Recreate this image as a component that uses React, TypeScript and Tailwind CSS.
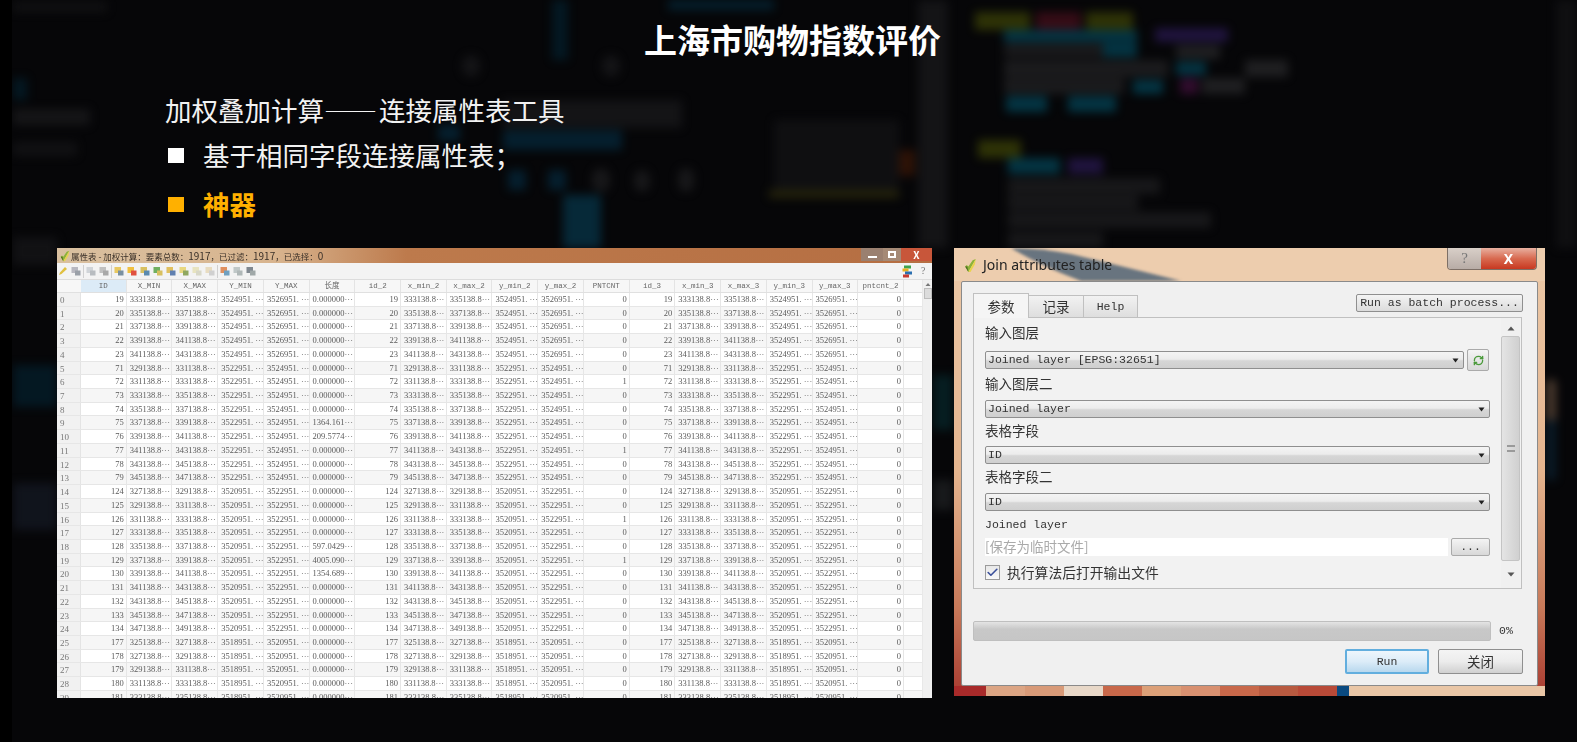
import { Check, RefreshCw } from 'lucide-react'

const HEADERS = [
  'ID', 'X_MIN', 'X_MAX', 'Y_MIN', 'Y_MAX', '长度', 'id_2', 'x_min_2', 'x_max_2',
  'y_min_2', 'y_max_2', 'PNTCNT', 'id_3', 'x_min_3', 'x_max_3', 'y_min_3', 'y_max_3', 'pntcnt_2',
]

const IDS = [19, 20, 21, 22, 23, 71, 72, 73, 74, 75, 76, 77, 78, 79, 124, 125, 126, 127, 128, 129, 130, 131, 132, 133, 134, 177, 178, 179, 180, 181]
const X_MIN = [333, 335, 337, 339, 341, 329, 331, 333, 335, 337, 339, 341, 343, 345, 327, 329, 331, 333, 335, 337, 339, 341, 343, 345, 347, 325, 327, 329, 331, 333]
const LENGTHS: Record<number, string> = { 9: '1364.161', 10: '209.5774', 18: '597.0429', 19: '4005.090', 20: '1354.689' }
const COUNTS = [6, 11, 16, 19]

function yMin(i: number) {
  if (i < 5) return 3524951
  if (i < 14) return 3522951
  if (i < 25) return 3520951
  return 3518951
}

function rowCells(i: number) {
  const x1 = `${X_MIN[i]}138.8···`
  const x2 = `${X_MIN[i] + 2}138.8···`
  const y1 = `${yMin(i)}. ···`
  const y2 = `${yMin(i) + 2000}. ···`
  const id = String(IDS[i])
  return [
    id, x1, x2, y1, y2, `${LENGTHS[i] ?? '0.000000'}···`,
    id, x1, x2, y1, y2, COUNTS.includes(i) ? '1' : '0',
    id, x1, x2, y1, y2, '0',
  ]
}

const RIGHT_ALIGNED = [0, 6, 11, 12, 17]

// blurred code editor behind the slide
const BACKDROP = [
  'left-[918px] top-0 w-[30px] h-[248px] bg-[#1a1a1c]',
  'left-[1556px] top-0 w-[21px] h-[248px] bg-[#131315]',
  'left-[975px] top-[12px] w-[55px] h-[18px] bg-[#3f4506]',
  'left-[1036px] top-[12px] w-[45px] h-[18px] bg-[#4a0f1c]',
  'left-[1086px] top-[12px] w-[47px] h-[18px] bg-[#3f4506]',
  'left-[1004px] top-[30px] w-[133px] h-[12px] bg-[#03485c]',
  'left-[1155px] top-[28px] w-[73px] h-[14px] bg-[#2b1a55]',
  'left-[1004px] top-[43px] w-[99px] h-[14px] bg-[#222224]',
  'left-[1103px] top-[43px] w-[34px] h-[14px] bg-[#03485c]',
  'left-[1176px] top-[45px] w-[44px] h-[14px] bg-[#2a2a2c]',
  'left-[1004px] top-[60px] w-[164px] h-[17px] bg-[#242426]',
  'left-[1176px] top-[62px] w-[30px] h-[13px] bg-[#03485c]',
  'left-[1245px] top-[60px] w-[43px] h-[17px] bg-[#2a2a2c]',
  'left-[1004px] top-[78px] w-[120px] h-[16px] bg-[#242426]',
  'left-[1133px] top-[80px] w-[30px] h-[14px] bg-[#03485c]',
  'left-[1180px] top-[78px] w-[18px] h-[16px] bg-[#45103f]',
  'left-[1202px] top-[78px] w-[43px] h-[16px] bg-[#2a2a2c]',
  'left-[1006px] top-[96px] w-[41px] h-[16px] bg-[#03485c]',
  'left-[1068px] top-[96px] w-[48px] h-[16px] bg-[#03485c]',
  'left-[978px] top-[140px] w-[43px] h-[18px] bg-[#3f4506]',
  'left-[1008px] top-[158px] w-[52px] h-[16px] bg-[#03485c]',
  'left-[1068px] top-[158px] w-[35px] h-[16px] bg-[#2b1a55]',
  'left-[1008px] top-[178px] w-[152px] h-[16px] bg-[#1f1f21]',
  'left-[1008px] top-[195px] w-[130px] h-[15px] bg-[#1f1f21]',
  'left-[1008px] top-[212px] w-[203px] h-[16px] bg-[#1f1f21]',
  'left-[1008px] top-[232px] w-[95px] h-[16px] bg-[#1f1f21]',
  'left-[552px] top-0 w-[16px] h-[60px] bg-[#03202e]',
  'left-[668px] top-0 w-[106px] h-[10px] bg-[#042a3d]',
  'left-[503px] top-[100px] w-[179px] h-[28px] bg-[#1a1a1c]',
  'left-[503px] top-[130px] w-[119px] h-[20px] bg-[#052a3e]',
  'left-[438px] top-[125px] w-[22px] h-[16px] bg-[#052a3e]',
  'left-[462px] top-[55px] w-[18px] h-[22px] rounded-full bg-[#1a1a1c]',
  'left-[602px] top-[55px] w-[18px] h-[22px] rounded-full bg-[#1a1a1c]',
  'left-[592px] top-[168px] w-[18px] h-[24px] rounded-full bg-[#1f1f21]',
  'left-[634px] top-[170px] w-[16px] h-[22px] rounded-full bg-[#1f1f21]',
  'left-[678px] top-[168px] w-[16px] h-[24px] rounded-full bg-[#1f1f21]',
  'left-[508px] top-[170px] w-[18px] h-[20px] bg-[#052a3e]',
  'left-[548px] top-[170px] w-[18px] h-[20px] bg-[#052a3e]',
  'left-[563px] top-[195px] w-[38px] h-[53px] bg-[#06384d]',
  'left-[774px] top-[120px] w-[125px] h-[70px] bg-[#141416]',
  'left-[769px] top-[190px] w-[130px] h-[8px] bg-[#33300c]',
  'left-[899px] top-[150px] w-[16px] h-[26px] bg-[#3f1806]',
  'left-[13px] top-[2px] w-[94px] h-[10px] bg-[#151517]',
  'left-[13px] top-[78px] w-[14px] h-[22px] bg-[#03202e]',
  'left-[13px] top-[109px] w-[77px] h-[16px] bg-[#1c1c1e]',
  'left-[13px] top-[142px] w-[64px] h-[14px] bg-[#161618]',
  'left-[13px] top-[237px] w-[44px] h-[28px] bg-[#171719]',
  'left-[13px] top-[365px] w-[44px] h-[42px] bg-[#04202e]',
  'left-[13px] top-[483px] w-[44px] h-[47px] bg-[#151a25]',
  'left-[933px] top-[375px] w-[20px] h-[55px] bg-[#06282c]',
  'left-[933px] top-[480px] w-[20px] h-[30px] bg-[#202224]',
  'left-[1546px] top-[380px] w-[10px] h-[40px] bg-[#6a5240]',
  'left-[1546px] top-[420px] w-[10px] h-[60px] bg-[#0c2436]',
]

function QgisIcon({ size = 13 }: { size?: number }) {
  return (
    <svg width={size} height={size} viewBox="0 0 14 14" className="shrink-0">
      <path d="M2 8 L5 13 L12 1 L9 2 L5 8 L3.5 6.5 Z" fill="#8db33a" />
      <path d="M5 13 L12 1 L11 6 L7 13 Z" fill="#e8d44a" />
      <path d="M2 8 L5 13 L4 8 Z" fill="#4a6a20" />
    </svg>
  )
}

function ToolIcon({ a, b }: { a: string; b: string }) {
  return (
    <svg width="10" height="10" viewBox="0 0 10 10" className="shrink-0">
      <rect x="0.5" y="1" width="6.5" height="6" fill={a} />
      <rect x="4" y="4.5" width="5.5" height="5" fill={b} />
    </svg>
  )
}

function Separator() {
  return <span className="mx-[-1px] h-[13px] w-px bg-[#d0d0d0]" />
}

function AttributeTable() {
  return (
    <div className="flex h-[450px] w-[875px] shrink-0 flex-col overflow-hidden bg-white blur-[0.35px]">
      <div className="flex h-[15px] shrink-0 items-center bg-[linear-gradient(90deg,#d9c0a0_0%,#d8b48e_25%,#bd7a4c_40%,#b56e42_100%)] pl-[2px]">
        <QgisIcon size={12} />
        <span className="text-[8.5px] leading-none whitespace-nowrap text-[#3a3028]">
          属性表 - 加权计算：要素总数：<span className="text-[10px]">1917</span>，已过滤：<span className="text-[10px]">1917</span>，已选择：<span className="text-[10px]">0</span>
        </span>
        <div className="ml-auto flex h-[13px] self-start">
          <div className="flex w-[22px] items-end justify-center bg-[#9a8070] pb-[3px]">
            <span className="h-[2px] w-[9px] bg-white" />
          </div>
          <div className="flex w-[18px] items-center justify-center bg-[#a58a76]">
            <span className="h-[7px] w-[8px] border-2 border-white" />
          </div>
          <div className="flex w-[31px] items-center justify-center bg-[#c8563a] text-[10px] leading-none font-bold text-white">
            X
          </div>
        </div>
      </div>
      <div className="flex h-[17px] shrink-0 items-center gap-[3px] border-b border-[#dcdcdc] bg-[#f3f3f3] pl-[1px] pr-[3px]">
        <svg width="10" height="10" viewBox="0 0 10 10" className="shrink-0">
          <path d="M1 9 L2 6.5 L7 1 L9 3 L3.5 8 Z" fill="#e0c040" />
        </svg>
        <ToolIcon a="#b8b8c0" b="#9aa0a8" />
        <Separator />
        <ToolIcon a="#d0d4d8" b="#b8bcc0" />
        <ToolIcon a="#c0c0c0" b="#a8a8a8" />
        <Separator />
        <ToolIcon a="#e8c860" b="#7a90a0" />
        <ToolIcon a="#f0c040" b="#e05040" />
        <ToolIcon a="#d8c060" b="#5a8ab0" />
        <ToolIcon a="#70b060" b="#d8c060" />
        <ToolIcon a="#e0c060" b="#6080b0" />
        <ToolIcon a="#e8d880" b="#90a860" />
        <ToolIcon a="#e8e4c0" b="#d8d8c8" />
        <ToolIcon a="#e8dcc0" b="#d0d0d0" />
        <Separator />
        <ToolIcon a="#e09060" b="#70a0c0" />
        <ToolIcon a="#c0c8c8" b="#b0b8b8" />
        <ToolIcon a="#808890" b="#a0a8a8" />
        <svg width="11" height="13" viewBox="0 0 11 13" className="ml-auto">
          <rect x="2" y="0.5" width="7" height="3" fill="#3fa34d" />
          <rect x="0.5" y="3.5" width="6" height="3" fill="#e8b020" />
          <rect x="3" y="6.5" width="7" height="3" fill="#2a6fb0" />
          <rect x="1" y="9.5" width="6" height="3" fill="#c83a30" />
        </svg>
        <span className="ml-[5px] w-[8px] font-['Liberation_Serif',serif] text-[10px] leading-none text-[#777]">?</span>
      </div>
      <div className="flex min-h-0 flex-1">
        <div className="w-[865px] overflow-hidden">
          <div className="grid h-[13px] grid-cols-[24px_repeat(18,45.72px)] border-b border-[#e0e0e0] bg-[#f7f7f7]">
            <span />
            {HEADERS.map((h, c) => (
              <span
                key={c}
                className={`border-r border-[#e4e4e4] text-center font-['Liberation_Mono','Noto_Sans_CJK_SC',monospace] text-[7.5px] leading-[12px] text-[#666] ${c === 0 ? 'bg-[#dcebf7]' : ''}`}
              >
                {h}
              </span>
            ))}
          </div>
          {IDS.map((_, i) => (
            <div
              key={i}
              className={`grid h-[13.73px] grid-cols-[24px_repeat(18,45.72px)] border-b border-[#e6e6e6] ${i % 2 ? 'bg-[#f6f6f6]' : 'bg-white'}`}
            >
              <span className="overflow-hidden border-r border-[#e4e4e4] bg-[#f1f1f1] pl-[3px] font-['Liberation_Serif',serif] text-[9px] leading-[15px] text-[#777]">
                {i}
              </span>
              {rowCells(i).map((v, c) => (
                <span
                  key={c}
                  className={`overflow-hidden border-r border-[#e6e6e6] font-['Liberation_Serif',serif] text-[8.5px] leading-[12px] whitespace-nowrap text-[#5a5a5a] ${RIGHT_ALIGNED.includes(c) ? 'pr-[2px] text-right' : 'pl-[3px]'}`}
                >
                  {v}
                </span>
              ))}
            </div>
          ))}
        </div>
        <div className="flex w-[10px] flex-col items-center border-l border-[#e8e8e8] bg-[#f0f0f0]">
          <svg width="6" height="5" viewBox="0 0 6 5" className="mt-[2px]">
            <path d="M3 1 L5.5 4 L0.5 4 Z" fill="#777" />
          </svg>
          <span className="mt-[1px] h-[11px] w-[8px] border border-[#bdbdbd] bg-[#dcdcdc]" />
        </div>
      </div>
    </div>
  )
}

function Arrow() {
  return (
    <svg width="7" height="5" viewBox="0 0 7 5" className="shrink-0">
      <path d="M0.5 0.5 L6.5 0.5 L3.5 4.5 Z" fill="#222" />
    </svg>
  )
}

function Combo({ text, className }: { text: string; className: string }) {
  return (
    <div
      className={`flex shrink-0 items-center justify-between rounded-[2px] border border-[#8f8f8f] bg-[linear-gradient(180deg,#f4f4f4_0%,#ececec_45%,#d6d6d6_55%,#cfcfcf_100%)] pl-[2px] pr-[4px] font-['Liberation_Mono',monospace] text-[11.5px] leading-none text-[#333] ${className}`}
    >
      <span>{text}</span>
      <Arrow />
    </div>
  )
}

function FieldLabel({ text, className }: { text: string; className: string }) {
  return (
    <div className={`h-[18px] font-['Noto_Sans_CJK_SC',sans-serif] text-[13.5px] leading-[12px] text-[#333] ${className}`}>
      {text}
    </div>
  )
}

const TASKBAR = [
  'w-[32px] bg-[#a82a2a]',
  'w-[39px] bg-[#dca584]',
  'w-[39px] bg-[#d89a78]',
  'w-[39px] bg-[#e8d8c8]',
  'w-[39px] bg-[#c8684a]',
  'w-[39px] bg-[#dca078]',
  'w-[39px] bg-[#d89070]',
  'w-[39px] bg-[#c8684a]',
  'w-[39px] bg-[#b85a40]',
  'w-[39px] bg-[#b84a38]',
  'w-[12px] bg-[#0a4a80]',
]

function JoinDialog() {
  return (
    <div className="flex h-[448px] w-[591px] shrink-0 flex-col overflow-hidden bg-[linear-gradient(180deg,#ecc9a8_0%,#e4b48e_50%,#c87a5a_80%,#a83a30_100%)] blur-[0.3px]">
      <div className="relative flex h-[33px] shrink-0 overflow-hidden bg-[#edcdae] pl-[9px]">
        <svg viewBox="0 0 170 33" className="absolute top-0 left-[57px] h-[33px] w-[170px] blur-[1.5px]">
          <path d="M0 0 Q30 18 70 33 L170 33 Q110 18 60 6 Q30 0 0 0 Z" fill="#68747f" />
        </svg>
        <div className="relative mt-[9px] flex h-[16px] items-center gap-[5px]">
          <QgisIcon size={15} />
          <span className="font-['Noto_Sans',sans-serif] text-[14px] leading-none text-[#222]">Join attributes table</span>
        </div>
        <div className="relative mr-[8px] ml-auto flex h-[22px] overflow-hidden rounded-b-[4px] border border-t-0 border-[#7d6f66]">
          <div className="flex w-[33px] items-center justify-center bg-[linear-gradient(180deg,#d8cfc8,#b8aca6)] font-['Liberation_Serif',serif] text-[15px] leading-none text-[#777]">
            ?
          </div>
          <div className="flex w-[55px] items-center justify-center bg-[linear-gradient(180deg,#e8b0a0_0%,#d86a50_50%,#c83820_100%)] font-['Noto_Sans',sans-serif] text-[14px] leading-none font-bold text-white">
            X
          </div>
        </div>
      </div>
      <div className="mx-[7px] flex h-[405px] shrink-0 flex-col rounded-[2px] border border-[#8a8a8a] bg-[#f0f0f0] pt-[11px] pl-[11px]">
        <div className="flex h-[24px] w-[550px] items-start justify-between">
          <div className="flex items-end">
            <div className="relative z-10 flex h-[25px] w-[56px] items-center justify-center border border-b-0 border-[#c0c0c0] bg-[#f5f5f5] font-['Noto_Sans_CJK_SC',sans-serif] text-[13.5px] text-[#333]">
              参数
            </div>
            <div className="flex h-[23px] w-[55px] items-center justify-center border-y border-r border-[#c0c0c0] bg-[linear-gradient(180deg,#f2f2f2,#dedede)] font-['Noto_Sans_CJK_SC',sans-serif] text-[13.5px] text-[#333]">
              记录
            </div>
            <div className="flex h-[23px] w-[54px] items-center justify-center border-y border-r border-[#c0c0c0] bg-[linear-gradient(180deg,#f2f2f2,#dedede)] font-['Liberation_Mono',monospace] text-[11.5px] text-[#333]">
              Help
            </div>
          </div>
          <div className="mt-[1px] flex h-[18px] w-[167px] items-center justify-center rounded-[2px] border border-[#8f8f8f] bg-[linear-gradient(180deg,#f4f4f4,#dcdcdc)] font-['Liberation_Mono',monospace] text-[11.5px] leading-none whitespace-nowrap text-[#333]">
            Run as batch process...
          </div>
        </div>
        <div className="flex h-[272px] w-[549px] border border-[#c0c0c0] bg-[#f2f2f2]">
          <div className="w-[516px] pt-[8px] pl-[11px]">
            <FieldLabel text="输入图层" className="" />
            <div className="mt-[5px] flex h-[22px] items-center gap-[3px]">
              <Combo text="Joined layer [EPSG:32651]" className="h-[18px] w-[479px]" />
              <div className="flex h-[22px] w-[22px] shrink-0 items-center justify-center rounded-[2px] border border-[#aaa] bg-[linear-gradient(180deg,#f4f4f4,#d8d8d8)]">
                <RefreshCw size={11} strokeWidth={3} className="text-[#4a9a3a]" />
              </div>
            </div>
            <FieldLabel text="输入图层二" className="mt-[6px]" />
            <Combo text="Joined layer" className="mt-[5px] h-[18px] w-[505px]" />
            <FieldLabel text="表格字段" className="mt-[6px]" />
            <Combo text="ID" className="mt-[4px] h-[18px] w-[505px]" />
            <FieldLabel text="表格字段二" className="mt-[6px]" />
            <Combo text="ID" className="mt-[5px] h-[18px] w-[505px]" />
            <div className="mt-[5px] h-[18px] font-['Liberation_Mono',monospace] text-[11.5px] leading-[18px] text-[#333]">
              Joined layer
            </div>
            <div className="mt-[4px] flex h-[18px] gap-[3px]">
              <div className="flex w-[463px] shrink-0 items-center bg-white font-['Noto_Sans_CJK_SC',sans-serif] text-[13.5px] leading-none text-[#aaa]">
                [保存为临时文件]
              </div>
              <div className="flex w-[39px] shrink-0 items-center justify-center rounded-[2px] border border-[#aaa] bg-[linear-gradient(180deg,#f4f4f4,#d8d8d8)] font-['Liberation_Mono',monospace] text-[11.5px] leading-none text-[#333]">
                ...
              </div>
            </div>
            <div className="mt-[9px] flex h-[15px] items-center gap-[7px]">
              <div className="flex h-[15px] w-[15px] items-center justify-center border border-[#9a9a9a] bg-[linear-gradient(180deg,#e8e8e8,#f8f8f8)]">
                <Check size={13} strokeWidth={3} className="text-[#3a4f9a]" />
              </div>
              <span className="font-['Noto_Sans_CJK_SC',sans-serif] text-[13.8px] leading-none text-[#333]">执行算法后打开输出文件</span>
            </div>
          </div>
          <div className="mr-[1px] ml-auto flex w-[19px] flex-col items-center bg-[#f0f0f0] pt-[8px]">
            <svg width="8" height="5" viewBox="0 0 8 5">
              <path d="M4 0.5 L7.5 4.5 L0.5 4.5 Z" fill="#555" />
            </svg>
            <div className="mt-[5px] flex h-[225px] w-[19px] items-center justify-center rounded-[2px] border border-[#c4c4c4] bg-[linear-gradient(90deg,#e4e4e4,#d0d0d0)]">
              <span className="h-[7px] w-[8px] border-y-2 border-[#9a9a9a]" />
            </div>
            <svg width="8" height="5" viewBox="0 0 8 5" className="mt-[11px]">
              <path d="M0.5 0.5 L7.5 0.5 L4 4.5 Z" fill="#555" />
            </svg>
          </div>
        </div>
        <div className="mt-[32px] flex h-[20px] items-center">
          <div className="h-[20px] w-[518px] rounded-[2px] border border-[#bfbfbf] bg-[linear-gradient(180deg,#e4e4e4_0%,#c8c8c8_40%,#c6c6c6_100%)]" />
          <span className="ml-[8px] font-['Liberation_Mono',monospace] text-[11.5px] leading-none text-[#333]">0%</span>
        </div>
        <div className="mt-[8px] flex w-[550px] justify-end gap-[9px]">
          <div className="flex h-[25px] w-[84px] items-center justify-center rounded-[2px] border-2 border-[#62aede] bg-[linear-gradient(180deg,#eef6fc_0%,#dcecf8_50%,#b8d8ee_100%)] font-['Liberation_Mono',monospace] text-[11.5px] leading-none text-[#333]">
            Run
          </div>
          <div className="flex h-[25px] w-[85px] items-center justify-center rounded-[2px] border border-[#8f8f8f] bg-[linear-gradient(180deg,#f4f4f4_0%,#ececec_50%,#d0d0d0_100%)] font-['Noto_Sans_CJK_SC',sans-serif] text-[13.5px] leading-none text-[#333]">
            关闭
          </div>
        </div>
      </div>
      <div className="flex h-[10px] shrink-0 bg-[#e9c6a6]">
        {TASKBAR.map((c, i) => (
          <span key={i} className={`h-full ${c}`} />
        ))}
      </div>
    </div>
  )
}

export default function App() {
  return (
    <div lang="zh-CN" className="relative h-[742px] w-[1577px] overflow-hidden bg-[#060608] font-['Noto_Sans_CJK_SC',sans-serif]">
      <div className="absolute inset-0 opacity-70 blur-[5px]">
        {BACKDROP.map((c, i) => (
          <div key={i} className={`absolute ${c}`} />
        ))}
      </div>
      <div className="absolute top-0 left-0 h-full w-[12px] bg-black" />

      <div className="relative flex h-full flex-col">
        <h1 className="flex h-[78px] shrink-0 items-center justify-center pl-[8px] text-[33px] leading-none font-bold text-white">
          上海市购物指数评价
        </h1>
        <div className="mt-[9px] h-[46px] shrink-0 pl-[165px] text-[26.5px] leading-[46px] text-[#f2f2f2]">
          加权叠加计算<span className="tracking-[2px]">——</span>连接属性表工具
        </div>
        <div className="mt-[-1px] flex h-[46px] shrink-0 items-center gap-[19px] pl-[168px] text-[26.5px] leading-none text-[#f2f2f2]">
          <span className="h-[15px] w-[16px] bg-white" />
          基于相同字段连接属性表；
        </div>
        <div className="mt-[3px] flex h-[46px] shrink-0 items-center gap-[19px] pl-[168px] text-[26.5px] leading-none font-bold text-[#ffb000]">
          <span className="h-[15px] w-[16px] bg-[#ffb000]" />
          神器
        </div>
        <div className="mt-[21px] flex items-start gap-[22px] pl-[57px]">
          <AttributeTable />
          <JoinDialog />
        </div>
      </div>
    </div>
  )
}
